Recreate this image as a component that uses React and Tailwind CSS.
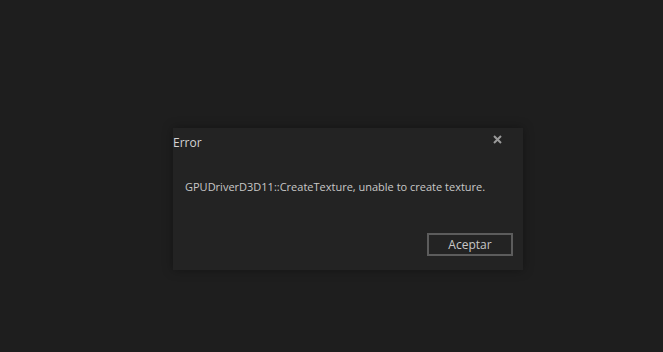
import React from 'react';

const App = () => {
    return (
        <div className="w-[663px] h-[352px] bg-[#1e1e1e] pt-[128px] pl-[173px]" style={{ fontFamily: '"Open Sans", "Noto Sans", sans-serif' }}>
            <div className="w-[350px] h-[142px] bg-[#232323] shadow-[0_0_10px_rgba(0,0,0,0.35)] flex flex-col">
                <div className="flex items-start justify-between h-[30px]">
                    <span className="text-[12px] text-[#d4d4d4] pt-[6px]">Error</span>
                    {/* close cross */}
                    <svg width="9" height="9" viewBox="0 0 9 9" className="mr-[21px] mt-[7px]">
                        <path d="M1 1 L8 8 M8 1 L1 8" stroke="#9a9a9a" strokeWidth="2" />
                    </svg>
                </div>
                <p className="pl-[12px] pt-[21px] text-[11px] text-[#c8c8c8] leading-[16px]">
                    GPUDriverD3D11::CreateTexture, unable to create texture.
                </p>
                <div className="flex justify-end mt-[38px] pr-[10px]">
                    <button className="w-[86px] h-[23px] border-2 border-[#5c5c5c] text-[12px] text-[#c8c8c8] leading-[18px]">
                        Aceptar
                    </button>
                </div>
            </div>
        </div>
    );
};

export default App;
